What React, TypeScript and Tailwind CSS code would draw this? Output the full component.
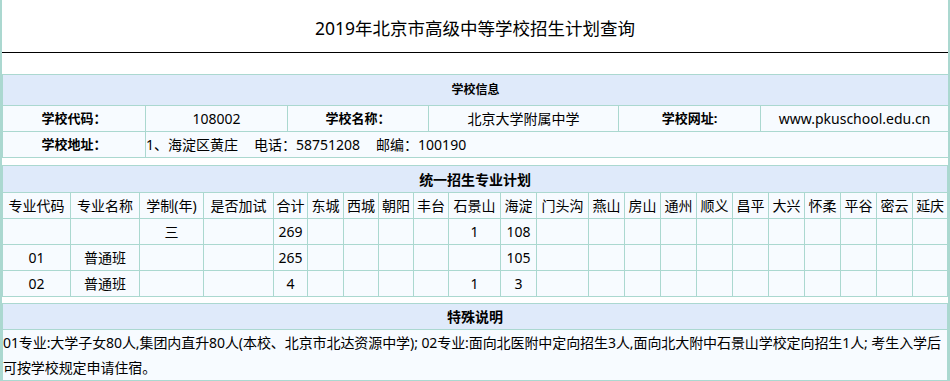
const districts = [
  "东城", "西城", "朝阳", "丰台", "石景山", "海淀", "门头沟", "燕山", "房山", "通州",
  "顺义", "昌平", "大兴", "怀柔", "平谷", "密云", "延庆",
];

const planCols = [68, 69, 64, 70, 34, 36, 35, 35, 35, 52, 36, 52, 36, 36, 36, 36, 36, 36, 36, 36, 36, 35];

type PlanRow = { code: string; name: string; years: string; total: string; sjs: string; hd: string };

const rows: PlanRow[] = [
  { code: "", name: "", years: "三", total: "269", sjs: "1", hd: "108" },
  { code: "01", name: "普通班", years: "", total: "265", sjs: "", hd: "105" },
  { code: "02", name: "普通班", years: "", total: "4", sjs: "1", hd: "3" },
];

const cell = "border border-[#abd8d0] p-0 text-center align-middle";
const head = "border border-[#abd8d0] bg-[#dfeafa] p-0 text-center align-middle font-bold";

export default function App() {
  return (
    <div
      className="w-[950px] border-x-2 border-[#abd8d0] bg-white text-black"
      style={{ fontFamily: '"Noto Sans", "Noto Sans CJK SC", sans-serif' }}
    >
      <div className="h-[53px] pt-[4px] border-b border-black flex items-center justify-center text-[17.5px]">
        2019年北京市高级中等学校招生计划查询
      </div>
      <div className="h-[21px]" />

      <table className="w-[946px] table-fixed border-collapse text-[14px]">
        <colgroup>
          <col className="w-[143px]" />
          <col className="w-[142px]" />
          <col className="w-[141px]" />
          <col className="w-[190px]" />
          <col className="w-[142px]" />
          <col className="w-[188px]" />
        </colgroup>
        <tbody>
          <tr className="h-[31px]">
            <td colSpan={6} className={`${head} text-[12px]`}>学校信息</td>
          </tr>
          <tr className="h-[26px] bg-[#f7fbff]">
            <td className={`${cell} font-bold text-[13px]`}>学校代码：</td>
            <td className={cell}>108002</td>
            <td className={`${cell} font-bold text-[13px]`}>学校名称：</td>
            <td className={cell}>北京大学附属中学</td>
            <td className={`${cell} font-bold text-[13px]`}>学校网址:</td>
            <td className={cell}>www.pkuschool.edu.cn</td>
          </tr>
          <tr className="h-[26px] bg-[#f7fbff]">
            <td className={`${cell} font-bold text-[13px]`}>学校地址：</td>
            <td colSpan={5} className={`${cell} text-left`}>
              1、海淀区黄庄<span className="ml-4">电话：58751208</span>
              <span className="ml-4">邮编：100190</span>
            </td>
          </tr>
        </tbody>
      </table>

      <div className="h-[7px]" />

      <table className="w-[946px] table-fixed border-collapse text-[14px]">
        <colgroup>
          {planCols.map((w, i) => (
            <col key={i} style={{ width: w }} />
          ))}
        </colgroup>
        <tbody>
          <tr className="h-[27px]">
            <td colSpan={22} className={head}>统一招生专业计划</td>
          </tr>
          <tr className="h-[26px] bg-[#f7fbff]">
            <td className={cell}>专业代码</td>
            <td className={cell}>专业名称</td>
            <td className={cell}>学制(年)</td>
            <td className={cell}>是否加试</td>
            <td className={cell}>合计</td>
            {districts.map((d) => (
              <td key={d} className={cell}>{d}</td>
            ))}
          </tr>
          {rows.map((r, i) => (
            <tr key={i} className="h-[26px] bg-[#f7fbff]">
              <td className={cell}>{r.code}</td>
              <td className={cell}>{r.name}</td>
              <td className={cell}>{r.years}</td>
              <td className={cell}></td>
              <td className={cell}>{r.total}</td>
              {districts.map((d) => (
                <td key={d} className={cell}>
                  {d === "石景山" ? r.sjs : d === "海淀" ? r.hd : ""}
                </td>
              ))}
            </tr>
          ))}
        </tbody>
      </table>

      <div className="h-[6px]" />

      <table className="w-[946px] table-fixed border-collapse text-[14px]">
        <tbody>
          <tr className="h-[26px]">
            <td className={head}>特殊说明</td>
          </tr>
          <tr className="bg-[#f7fbff]">
            <td className="border border-[#abd8d0] p-0 text-left leading-[25px] tracking-[-0.08px]">
              <span className="whitespace-nowrap">
                01专业:大学子女80人,集团内直升80人(本校、北京市北达资源中学); 02专业:面向北医附中定向招生3人,面向北大附中石景山学校定向招生1人; 考生入学后
              </span>
              <br />
              可按学校规定申请住宿。
            </td>
          </tr>
        </tbody>
      </table>
      <div className="h-[2px] bg-[#abd8d0]" />
    </div>
  );
}
